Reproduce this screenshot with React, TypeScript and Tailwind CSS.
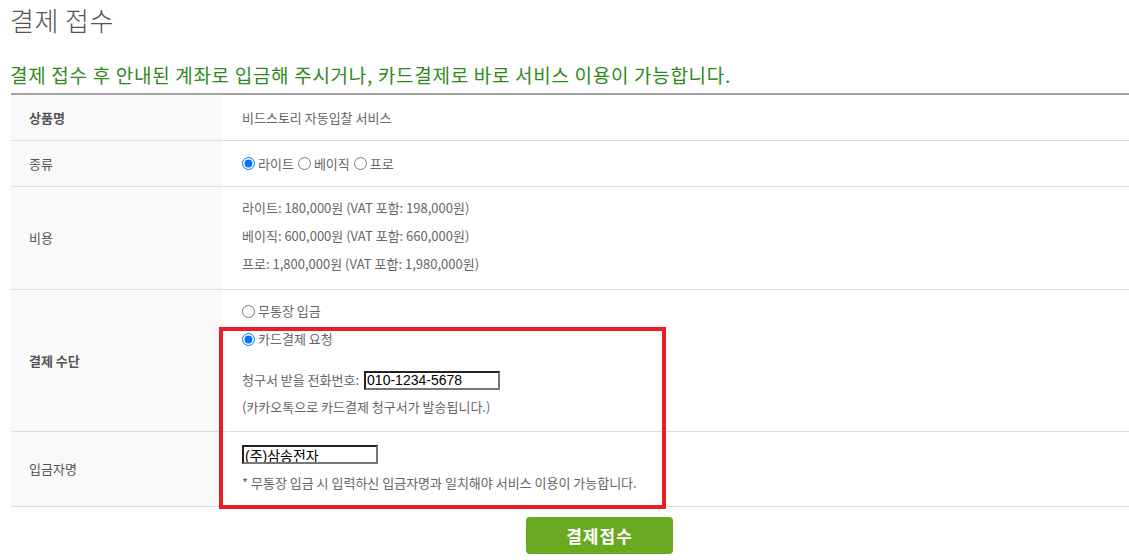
const FONT = "font-['Noto_Sans_CJK_KR','Noto_Sans',sans-serif]";

type Row = {
  label: string;
  bold?: boolean;
  height: string;
  content: React.ReactNode;
};

function Radio({ name, checked, label }: { name: string; checked?: boolean; label: string }) {
  return (
    <label className="inline-flex items-center">
      <input
        type="radio"
        name={name}
        defaultChecked={checked}
        className="m-0 mr-[3px] h-[13px] w-[13px]"
      />
      <span>{label}</span>
    </label>
  );
}

function TextBox({ value, width }: { value: string; width: string }) {
  return (
    <input
      type="text"
      defaultValue={value}
      className={`${width} h-[19px] border-2 border-t-[#222] border-l-[#222] border-r-[#777] border-b-[#777] bg-white px-[1px] text-[14px] leading-none text-black outline-none font-['Liberation_Sans','Noto_Sans_CJK_KR',sans-serif]`}
    />
  );
}

export default function App() {
  const rows: Row[] = [
    {
      label: "상품명",
      bold: true,
      height: "h-[46px]",
      content: <div className="flex h-full items-center">비드스토리 자동입찰 서비스</div>,
    },
    {
      label: "종류",
      height: "h-[46px]",
      content: (
        <div className="flex h-full items-center gap-[4px]">
          <Radio name="kind" checked label="라이트" />
          <Radio name="kind" label="베이직" />
          <Radio name="kind" label="프로" />
        </div>
      ),
    },
    {
      label: "비용",
      height: "h-[103px]",
      content: (
        <div className="pt-[7px]">
          <div className="flex h-[28px] items-center">라이트: 180,000원 (VAT 포함: 198,000원)</div>
          <div className="flex h-[28px] items-center">베이직: 600,000원 (VAT 포함: 660,000원)</div>
          <div className="flex h-[28px] items-center">프로: 1,800,000원 (VAT 포함: 1,980,000원)</div>
        </div>
      ),
    },
    {
      label: "결제 수단",
      bold: true,
      height: "h-[142px]",
      content: (
        <div className="pt-[7px]">
          <div className="flex h-[28px] items-center">
            <Radio name="pay" label="무통장 입금" />
          </div>
          <div className="flex h-[28px] items-center">
            <Radio name="pay" checked label="카드결제 요청" />
          </div>
          <div className="mt-[13px] flex h-[28px] items-center gap-[5px]">
            <span>청구서 받을 전화번호:</span>
            <TextBox value="010-1234-5678" width="w-[136px]" />
          </div>
          <div className="flex h-[26px] items-center">(카카오톡으로 카드결제 청구서가 발송됩니다.)</div>
        </div>
      ),
    },
    {
      label: "입금자명",
      height: "h-[75px]",
      content: (
        <div className="pt-[13px]">
          <TextBox value="(주)삼송전자" width="w-[136px]" />
          <div className="mt-[8px] flex h-[20px] items-center">
            * 무통장 입금 시 입력하신 입금자명과 일치해야 서비스 이용이 가능합니다.
          </div>
        </div>
      ),
    },
  ];

  return (
    <div className={`h-[560px] w-full overflow-hidden bg-white ${FONT}`}>
      <div className="pl-[10px]">
        <h1 className="mt-[2px] h-[36px] text-[26px] leading-[36px] font-light tracking-[0.5px] text-[#555]">
          결제 접수
        </h1>
        <p className="mt-[25px] h-[24px] text-[19px] leading-[24px] tracking-[0.7px] text-[#2f8a1c]">
          결제 접수 후 안내된 계좌로 입금해 주시거나, 카드결제로 바로 서비스 이용이 가능합니다.
        </p>
      </div>

      <div className="relative mt-[6px] ml-[11px] w-[1177px] border-t-2 border-[#a3a3a3]">
        {rows.map((row) => (
          <div
            key={row.label}
            className={`grid grid-cols-[211px_1fr] border-b border-[#dcdcdc] ${row.height}`}
          >
            <div
              className={`flex items-center bg-[#f9f9f9] pl-[18px] text-[13px] text-[#555] ${
                row.bold ? "font-bold" : ""
              }`}
            >
              {row.label}
            </div>
            <div className="pl-[20px] text-[13px] text-[#666]">{row.content}</div>
          </div>
        ))}

        {/* highlight around the card payment fields */}
        <div className="pointer-events-none absolute top-[232px] left-[208px] h-[182px] w-[447px] border-4 border-[#ee1c25]" />

        <div className="mt-[10px] flex justify-center">
          <button className="h-[37px] w-[147px] rounded-[4px] bg-[#69a920] text-[17px] font-bold tracking-[1px] text-white">
            결제접수
          </button>
        </div>
      </div>
    </div>
  );
}
